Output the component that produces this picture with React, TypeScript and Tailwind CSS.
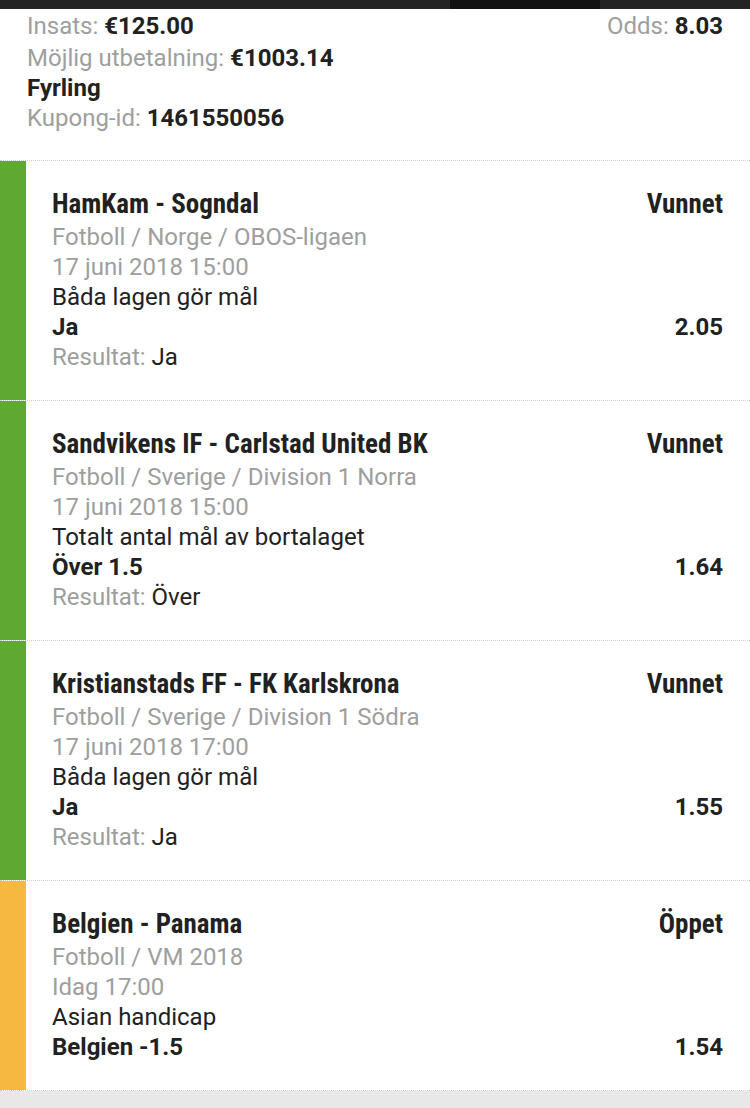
import React from 'react'

interface Selection {
  match: string
  status: string
  league: string
  time: string
  market: string
  pick: string
  odds: string
  result?: string
  open?: boolean
}

const selections: Selection[] = [
  {
    match: 'HamKam - Sogndal',
    status: 'Vunnet',
    league: 'Fotboll / Norge / OBOS-ligaen',
    time: '17 juni 2018 15:00',
    market: 'Båda lagen gör mål',
    pick: 'Ja',
    odds: '2.05',
    result: 'Ja',
  },
  {
    match: 'Sandvikens IF - Carlstad United BK',
    status: 'Vunnet',
    league: 'Fotboll / Sverige / Division 1 Norra',
    time: '17 juni 2018 15:00',
    market: 'Totalt antal mål av bortalaget',
    pick: 'Över 1.5',
    odds: '1.64',
    result: 'Över',
  },
  {
    match: 'Kristianstads FF - FK Karlskrona',
    status: 'Vunnet',
    league: 'Fotboll / Sverige / Division 1 Södra',
    time: '17 juni 2018 17:00',
    market: 'Båda lagen gör mål',
    pick: 'Ja',
    odds: '1.55',
    result: 'Ja',
  },
  {
    match: 'Belgien - Panama',
    status: 'Öppet',
    league: 'Fotboll / VM 2018',
    time: 'Idag 17:00',
    market: 'Asian handicap',
    pick: 'Belgien -1.5',
    odds: '1.54',
    open: true,
  },
]

const condensed = { fontFamily: '"Roboto Condensed", "Liberation Sans Narrow", Roboto, sans-serif' }

function SelectionRow({ sel }: { sel: Selection }) {
  return (
    <div className="flex border-b border-dotted border-[#00000030] bg-white">
      <div className={sel.open ? 'w-[26px] shrink-0 bg-[#f5b841]' : 'w-[26px] shrink-0 bg-[#5fa831]'} />
      <div className="flex-1 pl-[26px] pr-[27px] pt-[25px] pb-[28px]">
        <div
          className="flex justify-between text-[27px] leading-[36px] font-bold text-[#212121] font-stretch-condensed"
          style={condensed}
        >
          <span>{sel.match}</span>
          <span>{sel.status}</span>
        </div>
        <div className="text-[24px] leading-[30px] text-[#9e9e9e]">{sel.league}</div>
        <div className="text-[24px] leading-[30px] text-[#9e9e9e]">{sel.time}</div>
        <div className="text-[24px] leading-[30px] text-[#212121]">{sel.market}</div>
        <div className="flex justify-between text-[24px] leading-[30px] font-bold text-[#212121]">
          <span>{sel.pick}</span>
          <span>{sel.odds}</span>
        </div>
        {sel.result && (
          <div className="text-[24px] leading-[30px] text-[#9e9e9e]">
            Resultat: <span className="text-[#212121]">{sel.result}</span>
          </div>
        )}
      </div>
    </div>
  )
}

export default function App() {
  return (
    <div
      className="min-h-screen w-[750px] bg-[#e8e8e8]"
      style={{ fontFamily: 'Roboto, "Noto Sans", sans-serif' }}
    >
      <div className="flex h-[9px]">
        <div className="w-[450px] bg-[#232323]" />
        <div className="w-[150px] bg-[#121212]" />
        <div className="flex-1 bg-[#232323]" />
      </div>
      <div className="bg-white px-[27px] pt-[2px] pb-[27px] border-b border-dotted border-[#00000030] text-[24px] leading-[30px]">
        <div className="flex justify-between mb-[2px]">
          <span className="text-[#9e9e9e]">
            Insats: <span className="font-bold text-[#212121]">€125.00</span>
          </span>
          <span className="text-[#9e9e9e]">
            Odds: <span className="font-bold text-[#212121]">8.03</span>
          </span>
        </div>
        <div className="text-[#9e9e9e]">
          Möjlig utbetalning: <span className="font-bold text-[#212121]">€1003.14</span>
        </div>
        <div className="font-bold text-[#212121]">Fyrling</div>
        <div className="text-[#9e9e9e]">
          Kupong-id: <span className="font-bold text-[#212121]">1461550056</span>
        </div>
      </div>
      {selections.map((sel) => (
        <SelectionRow key={sel.match} sel={sel} />
      ))}
    </div>
  )
}
